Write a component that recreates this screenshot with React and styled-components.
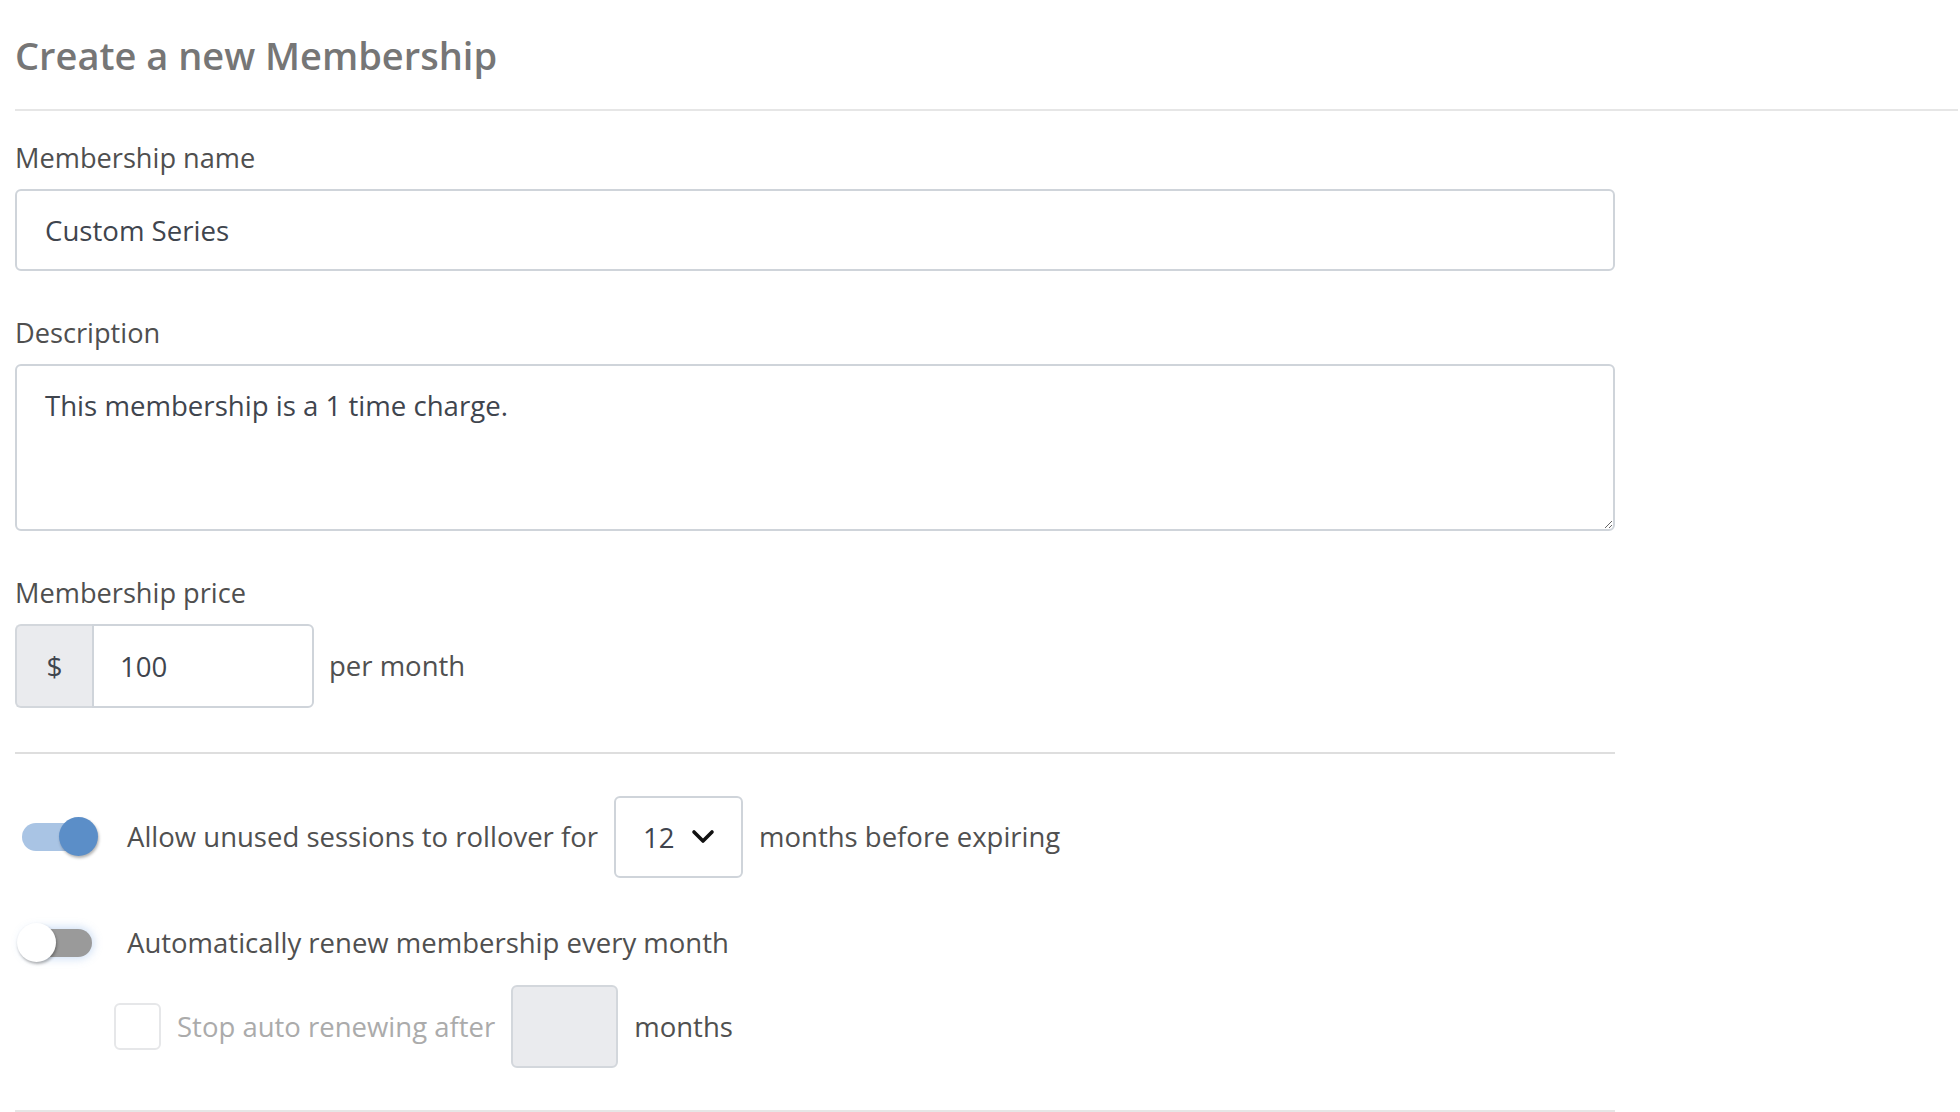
import React from "react";
import styled, { createGlobalStyle } from "styled-components";

const GlobalStyle = createGlobalStyle`
  body {
    margin: 0;
    background: #fff;
    font-family: "Open Sans", "Liberation Sans", sans-serif;
  }
  * { box-sizing: border-box; }
`;

const Page = styled.div`
  padding: 32px 2px 0 15px;
`;

const Title = styled.h1`
  margin: 0;
  font-size: 38px;
  line-height: 46px;
  font-weight: 600;
  color: #767676;
`;

const Divider = styled.div`
  height: 2px;
  background: ${(p) => p.color || "#e6e6e6"};
  margin-top: ${(p) => p.top}px;
  max-width: ${(p) => (p.full ? "none" : "1600px")};
`;

const Form = styled.form`
  max-width: 1600px;
`;

const Field = styled.div`
  margin-top: ${(p) => p.top}px;
`;

const Label = styled.label`
  display: block;
  font-size: 27.2px;
  line-height: 36px;
  color: #4f4f4f;
  margin-bottom: 13px;
`;

const TextInput = styled.input`
  display: block;
  width: 100%;
  height: 82px;
  border: 2px solid #cfd4da;
  border-radius: 6px;
  padding: 0 28px;
  font-family: inherit;
  font-size: 27.6px;
  color: #3f454e;
  outline: none;
`;

const TextArea = styled.textarea`
  display: block;
  width: 100%;
  height: 167px;
  border: 2px solid #cfd4da;
  border-radius: 6px;
  padding: 21px 28px;
  font-family: inherit;
  font-size: 27.6px;
  line-height: 36px;
  color: #3f454e;
  resize: vertical;
  outline: none;
`;

const PriceRow = styled.div`
  display: flex;
  align-items: center;
  gap: 15px;
`;

const PriceGroup = styled.div`
  display: flex;
  height: 84px;
`;

const Addon = styled.span`
  width: 77px;
  display: flex;
  align-items: center;
  justify-content: center;
  background: #eaebee;
  border: 2px solid #d3d7dc;
  border-right: none;
  border-radius: 6px 0 0 6px;
  font-size: 28px;
  color: #3f454e;
`;

const PriceInput = styled.input`
  width: 222px;
  height: 100%;
  border: 2px solid #cfd4da;
  border-radius: 0 6px 6px 0;
  padding: 0 26px;
  font-family: inherit;
  font-size: 27.6px;
  color: #3f454e;
  outline: none;
`;

const RowText = styled.span`
  font-size: 27.5px;
  line-height: 36px;
  color: ${(p) => (p.muted ? "#ababab" : "#505050")};
  white-space: nowrap;
`;

const OptionRow = styled.div`
  display: flex;
  align-items: center;
  gap: 16px;
  height: ${(p) => p.h}px;
  margin-top: ${(p) => p.top}px;
  padding-left: ${(p) => p.indent || 0}px;
`;

const SwitchTrack = styled.span`
  position: relative;
  flex: none;
  width: 70px;
  height: 28px;
  margin-left: 7px;
  margin-right: 19px;
  border-radius: 14px;
  background: ${(p) => (p.on ? "#a9c4e4" : "#9a9a9a")};
  box-shadow: ${(p) => (p.on ? "none" : "0 0 9px 2px rgba(120, 165, 225, 0.35)")};
`;

const SwitchKnob = styled.span`
  position: absolute;
  top: -6px;
  left: ${(p) => (p.on ? "37px" : "-5px")};
  width: 39px;
  height: 39px;
  border-radius: 50%;
  background: ${(p) => (p.on ? "#5b8ec8" : "#fff")};
  box-shadow: 1px 2px 3px rgba(0, 0, 0, 0.3);
`;

const Switch = ({ on }) => (
  <SwitchTrack on={on}>
    <SwitchKnob on={on} />
  </SwitchTrack>
);

const SelectBox = styled.div`
  display: flex;
  align-items: center;
  justify-content: space-between;
  width: 129px;
  height: 82px;
  padding: 0 26px 0 27px;
  border: 2px solid #cfd4da;
  border-radius: 6px;
  font-size: 27.6px;
  color: #3f454e;
`;

const Checkbox = styled.span`
  flex: none;
  width: 47px;
  height: 47px;
  border: 2px solid #e6e7e9;
  border-radius: 6px;
  background: #fff;
`;

const SmallInput = styled.span`
  width: 107px;
  height: 83px;
  background: #eaebee;
  border: 2px solid #d3d7dc;
  border-radius: 6px;
`;

const Chevron = () => (
  <svg width="24" height="16" viewBox="0 0 24 16" fill="none">
    <polyline
      points="3,3 12,12 21,3"
      stroke="#111"
      strokeWidth="3.6"
      strokeLinecap="round"
      strokeLinejoin="round"
    />
  </svg>
);

const App = () => (
  <Page>
    <GlobalStyle />
    <Title>Create a new Membership</Title>
    <Divider top={31} full />
    <Form onSubmit={(e) => e.preventDefault()}>
      <Field top={29}>
        <Label>Membership name</Label>
        <TextInput defaultValue="Custom Series" />
      </Field>
      <Field top={44}>
        <Label>Description</Label>
        <TextArea defaultValue="This membership is a 1 time charge." />
      </Field>
      <Field top={44}>
        <Label>Membership price</Label>
        <PriceRow>
          <PriceGroup>
            <Addon>$</Addon>
            <PriceInput defaultValue="100" />
          </PriceGroup>
          <RowText>per month</RowText>
        </PriceRow>
      </Field>
      <Divider top={44} color="#dedede" />
      <OptionRow h={82} top={42}>
        <Switch on />
        <RowText>Allow unused sessions to rollover for</RowText>
        <SelectBox>
          <span>12</span>
          <Chevron />
        </SelectBox>
        <RowText>months before expiring</RowText>
      </OptionRow>
      <OptionRow h={39} top={45}>
        <Switch />
        <RowText>Automatically renew membership every month</RowText>
      </OptionRow>
      <OptionRow h={83} top={23} indent={99}>
        <Checkbox />
        <RowText muted>Stop auto renewing after</RowText>
        <SmallInput />
        <RowText>months</RowText>
      </OptionRow>
      <Divider top={42} color="#e6e6e6" />
    </Form>
  </Page>
);

export default App;
